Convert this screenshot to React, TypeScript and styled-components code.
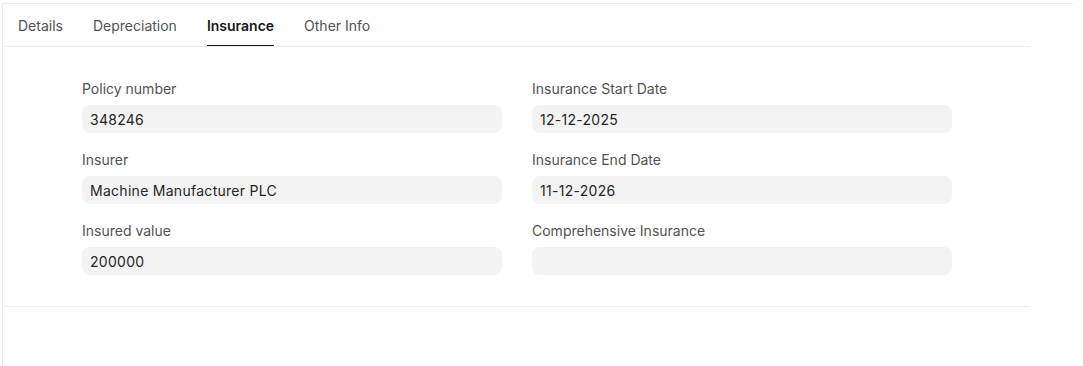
import styled, { createGlobalStyle } from 'styled-components'

const GlobalStyle = createGlobalStyle`
    body {
        margin: 0;
        background: #ffffff;
        font-family: Inter, 'Noto Sans', sans-serif;
    }
`

const tabs = ['Details', 'Depreciation', 'Insurance', 'Other Info']

const fields = [
    { label: 'Policy number', value: '348246' },
    { label: 'Insurance Start Date', value: '12-12-2025' },
    { label: 'Insurer', value: 'Machine Manufacturer PLC' },
    { label: 'Insurance End Date', value: '11-12-2026' },
    { label: 'Insured value', value: '200000' },
    { label: 'Comprehensive Insurance', value: '' },
]

const App = () => {
    return (
        <>
            <GlobalStyle />
            <Page>
                <Frame>
                    <Panel>
                        <TabBar>
                            {tabs.map((t) => (
                                <Tab key={t} $active={t === 'Insurance'}>
                                    {t}
                                </Tab>
                            ))}
                        </TabBar>
                        <Section>
                            <FieldGrid>
                                {fields.map((f) => (
                                    <Field key={f.label}>
                                        <Label>{f.label}</Label>
                                        <Value>{f.value}</Value>
                                    </Field>
                                ))}
                            </FieldGrid>
                        </Section>
                    </Panel>
                </Frame>
            </Page>
        </>
    )
}

export default App

const Page = styled.div`
    padding: 3px 10px 0 2px;
    height: 363px;
`

const Frame = styled.div`
    height: 100%;
    border-top: 1px solid #ededed;
    border-left: 1px solid #ededed;
`

const Panel = styled.div`
    width: 1027px;
    display: flex;
    flex-direction: column;
`

const TabBar = styled.div`
    display: flex;
    gap: 30px;
    padding: 0 15px;
    height: 42px;
    border-bottom: 1px solid #ededed;
`

const Tab = styled.div<{ $active?: boolean }>`
    display: flex;
    align-items: center;
    font-size: 14px;
    color: ${(p) => (p.$active ? '#171717' : '#525252')};
    font-weight: ${(p) => (p.$active ? 600 : 400)};
    box-shadow: ${(p) => (p.$active ? 'inset 0 -1px 0 #171717' : 'none')};
`

const Section = styled.div`
    padding: 32px 78px 31px 79px;
    border-bottom: 1px solid #ededed;
`

const FieldGrid = styled.div`
    display: grid;
    grid-template-columns: 1fr 1fr;
    column-gap: 30px;
    row-gap: 17px;
`

const Field = styled.div`
    display: flex;
    flex-direction: column;
    gap: 6px;
`

const Label = styled.div`
    font-size: 14px;
    line-height: 20px;
    color: #525252;
`

const Value = styled.div`
    height: 28px;
    box-sizing: border-box;
    padding: 0 8px;
    display: flex;
    align-items: center;
    background: #f3f3f3;
    border-radius: 8px;
    font-size: 14px;
    letter-spacing: 0.02em;
    color: #262626;
`
